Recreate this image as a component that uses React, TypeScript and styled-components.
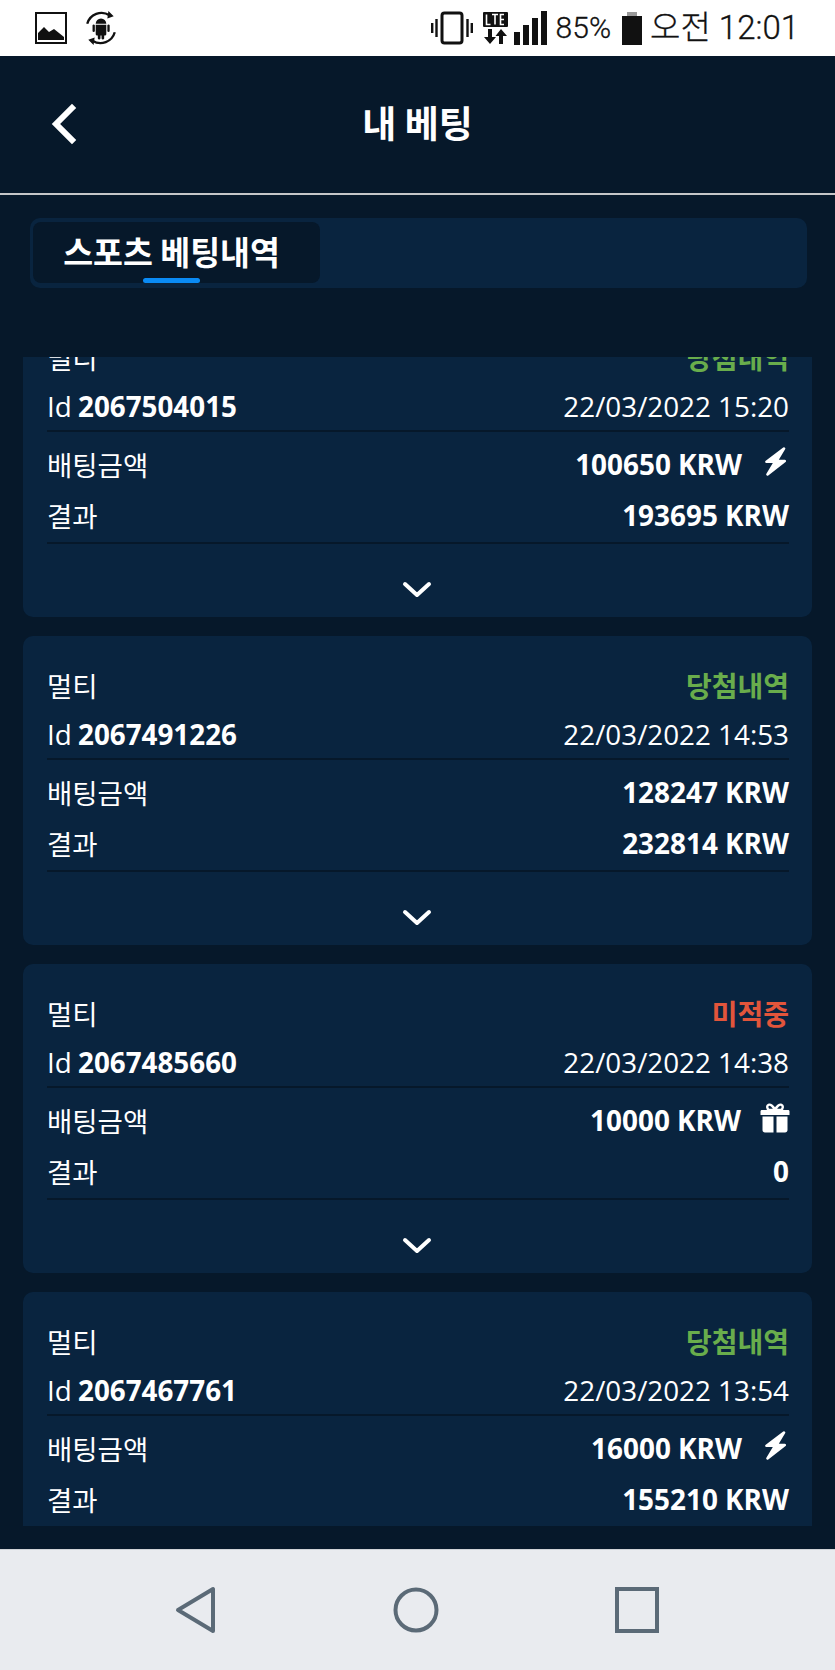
import { FC, useEffect, useRef } from "react";
import styled, { createGlobalStyle } from "styled-components";

const dark = "#06182a";
const panel = "#09243f";

const Global = createGlobalStyle`
  html, body {
    margin: 0;
    padding: 0;
    background: ${dark};
  }
  * {
    box-sizing: border-box;
  }
`;

const Screen = styled.div`
  width: 835px;
  height: 1670px;
  display: flex;
  flex-direction: column;
  overflow: hidden;
  background: ${dark};
  font-family: "Open Sans", "Noto Sans CJK KR", sans-serif;
  color: #fff;
`;

const StatusBar = styled.div`
  height: 56px;
  flex: none;
  display: flex;
  align-items: center;
  justify-content: space-between;
  padding: 0 36px 0 35px;
  background: #fff;
  color: #111;
  font-family: Roboto, "Noto Sans CJK KR", sans-serif;
`;

const StatusGroup = styled.div`
  display: flex;
  align-items: center;
`;

const StatusText = styled.span<{ $left: number; $size: number }>`
  font-size: ${(p) => p.$size}px;
  line-height: 56px;
  font-weight: 300;
  -webkit-text-stroke: 0.3px #111;
  margin-left: ${(p) => p.$left}px;
`;

const StatusIcon = styled.svg<{ $left?: number }>`
  display: block;
  flex: none;
  margin-left: ${(p) => p.$left ?? 0}px;
`;

const Header = styled.header`
  height: 139px;
  flex: none;
  display: flex;
  align-items: center;
  justify-content: center;
  position: relative;
  border-bottom: 2px solid #c4c6c8;
`;

const BackButton = styled.svg`
  position: absolute;
  left: 50px;
  top: 47px;
`;

const Title = styled.h1`
  margin: 0;
  font-size: 37px;
  font-weight: 700;
  line-height: 1;
  font-family: "Noto Sans CJK KR", sans-serif;
  padding-bottom: 5px;
`;

const TabBar = styled.nav`
  flex: none;
  height: 70px;
  margin: 23px 28px 0 30px;
  padding: 4px 3px 5px;
  border-radius: 10px;
  background: ${panel};
`;

const ActiveTab = styled.div`
  position: relative;
  width: 287px;
  height: 61px;
  display: flex;
  align-items: center;
  justify-content: center;
  padding: 0 10px 4px 0;
  border-radius: 8px;
  background: ${dark};
  font-family: "Noto Sans CJK KR", sans-serif;
  font-size: 32.5px;
  font-weight: 700;
`;

const TabMark = styled.span`
  position: absolute;
  left: 110px;
  bottom: 0;
  width: 57px;
  height: 5px;
  border-radius: 3px;
  background: #0a8bf5;
`;

const Scroller = styled.div`
  flex: none;
  height: 1169px;
  margin: 69px 23px 0;
  overflow: hidden;
`;

const CardList = styled.div`
  display: flex;
  flex-direction: column;
  gap: 19px;
`;

const Card = styled.article`
  height: 309px;
  flex: none;
  padding: 24px 23px 0 24px;
  border-radius: 10px;
  background: ${panel};
`;

const Row = styled.div<{ $h: number; $line?: boolean; $lift?: number }>`
  display: flex;
  align-items: center;
  justify-content: space-between;
  height: ${(p) => p.$h}px;
  padding-bottom: ${(p) => p.$lift ?? 0}px;
  border-bottom: ${(p) => (p.$line ? `2px solid #06182a` : "none")};
`;

const Label = styled.span`
  font-size: 27.5px;
  font-weight: 400;
  font-family: "Noto Sans CJK KR", sans-serif;
`;

const IdText = styled.span`
  font-size: 27.8px;
  font-weight: 400;
  word-spacing: -1px;
  b {
    font-weight: 700;
  }
`;

const DateText = styled.span`
  font-size: 27.8px;
  font-weight: 400;
`;

const Status = styled.span<{ $tone: "won" | "lost" }>`
  font-size: 28px;
  font-weight: 700;
  font-family: "Noto Sans CJK KR", sans-serif;
  color: ${(p) => (p.$tone === "won" ? "#69ad4c" : "#e2553b")};
`;

const Amount = styled.span`
  display: flex;
  align-items: center;
  font-size: 27.9px;
  font-weight: 700;
`;

const BoltIcon = styled.svg`
  display: block;
  flex: none;
  margin: -5px 3px 0 23px;
`;

const GiftIcon = styled.svg`
  display: block;
  flex: none;
  margin: -4px -1px 0 19px;
`;

const Expand = styled.div`
  display: flex;
  justify-content: center;
  padding: 37px 2px 0 0;
`;

const NavBar = styled.div`
  flex: none;
  height: 121px;
  margin-top: 23px;
  display: flex;
  align-items: flex-start;
  justify-content: center;
  gap: 175px;
  padding: 36px 1px 0 0;
  background: #e9ebef;
  border-top: 1px solid #cfd2d6;
`;

const Bolt: FC = () => (
  <BoltIcon width="21" height="29" viewBox="0 0 21 29">
    <path
      d="M19 1.500 1.500 14.800h8.500L2.500 27.500 19.800 14h-8.300Z"
      fill="#fff"
      stroke="#fff"
      strokeWidth="2.600"
      strokeLinejoin="round"
    />
  </BoltIcon>
);

const Gift: FC = () => (
  <GiftIcon width="30" height="30" viewBox="0 0 30 30">
    <path
      d="M15 7C13.500 3.500 10.500 1 8.500 1.800 6.500 2.600 7 6 9 7ZM15 7C16.500 3.500 19.500 1 21.500 1.800 23.500 2.600 23 6 21 7Z"
      fill="none"
      stroke="#fff"
      strokeWidth="2.400"
    />
    <path
      d="M2 7h26c1 0 1.500.5 1.500 1.500v3.500H.5V8.500C.5 7.500 1 7 2 7ZM2.500 13.500h11v16H5c-1.500 0-2.500-1-2.500-2.500ZM16.500 13.500h11V27c0 1.500-1 2.500-2.500 2.500h-8.500Z"
      fill="#fff"
    />
  </GiftIcon>
);

const Chevron: FC = () => (
  <svg width="30" height="18" viewBox="0 0 30 18">
    <path d="M3 3l12 11L27 3" fill="none" stroke="#fff" strokeWidth="4" strokeLinecap="round" strokeLinejoin="round" />
  </svg>
);

type Bet = {
  id: string;
  date: string;
  status: string;
  tone: "won" | "lost";
  stake: string;
  result: string;
  icon?: "bolt" | "gift";
};

const bets: Bet[] = [
  { id: "2067504015", date: "22/03/2022 15:20", status: "당첨내역", tone: "won", stake: "100650 KRW", result: "193695 KRW", icon: "bolt" },
  { id: "2067491226", date: "22/03/2022 14:53", status: "당첨내역", tone: "won", stake: "128247 KRW", result: "232814 KRW" },
  { id: "2067485660", date: "22/03/2022 14:38", status: "미적중", tone: "lost", stake: "10000 KRW", result: "0", icon: "gift" },
  { id: "2067467761", date: "22/03/2022 13:54", status: "당첨내역", tone: "won", stake: "16000 KRW", result: "155210 KRW", icon: "bolt" },
];

const BetCard: FC<Bet> = (props) => (
  <Card>
    <Row $h={50}>
      <Label>멀티</Label>
      <Status $tone={props.tone}>{props.status}</Status>
    </Row>
    <Row $h={50} $line>
      <IdText>
        Id <b>{props.id}</b>
      </IdText>
      <DateText>{props.date}</DateText>
    </Row>
    <Row $h={64}>
      <Label>배팅금액</Label>
      <Amount>
        {props.stake}
        {props.icon === "bolt" && <Bolt />}
        {props.icon === "gift" && <Gift />}
      </Amount>
    </Row>
    <Row $h={48} $line $lift={8}>
      <Label>결과</Label>
      <Amount>{props.result}</Amount>
    </Row>
    <Expand>
      <Chevron />
    </Expand>
  </Card>
);

const StatusIcons: FC = () => (
  <StatusGroup>
    <StatusIcon width="32" height="32" viewBox="0 0 32 32">
      <rect x="1" y="1" width="30" height="30" fill="none" stroke="#111" strokeWidth="2" />
      <path d="M3 28v-7l6-6 5 5 5-3 10 8v3Z" fill="#111" />
    </StatusIcon>
    <StatusIcon $left={16} width="36" height="36" viewBox="0 0 34 34">
      <path d="M4 13A14 14 0 0 1 25 5M30 21A14 14 0 0 1 9 29" fill="none" stroke="#111" strokeWidth="2.200" />
      <path d="M24 1l5 5-6 2ZM10 33l-5-5 6-2Z" fill="#111" />
      <path d="M12 13a5 5 0 0 1 10 0ZM12 14h10v9a1 1 0 0 1-1 1h-1v3a1.300 1.300 0 0 1-2.500 0v-3h-1v3a1.300 1.300 0 0 1-2.500 0v-3h-1a1 1 0 0 1-1-1ZM9 14.500a1.200 1.200 0 0 1 2.200 0V20a1.200 1.200 0 0 1-2.200 0ZM23 14.500a1.200 1.200 0 0 1 2.200 0V20a1.200 1.200 0 0 1-2.200 0Z" fill="#111" />
    </StatusIcon>
  </StatusGroup>
);

const SystemIcons: FC = () => (
  <StatusGroup>
    <StatusIcon width="42" height="34" viewBox="0 0 42 34">
      <rect x="11" y="2" width="20" height="30" rx="2.500" fill="none" stroke="#111" strokeWidth="3" />
      <path d="M1.200 12v10M5.500 8v18M36.500 8v18M40.800 12v10" stroke="#111" strokeWidth="2.400" />
    </StatusIcon>
    <StatusIcon $left={10} width="25" height="32" viewBox="0 0 25 32">
      <rect x="0" y="0" width="25" height="15" rx="1" fill="#111" />
      <path d="M3.500 2.500v10h4M9 2.500h6M12 2.500v10M21 2.500h-3.500v10H21M17.500 7.500H21" fill="none" stroke="#fff" strokeWidth="1.600" />
      <path d="M5 17v8H1l6 7 6-7H9v-8ZM16 32v-8h-3.500L18 17l6 7h-4v8Z" fill="#111" />
    </StatusIcon>
    <StatusIcon $left={6} width="33" height="34" viewBox="0 0 33 34">
      <path d="M0 21h6v13H0ZM9 14h6v20H9ZM18 7h6v27h-6ZM27 0h6v34h-6Z" fill="#111" />
    </StatusIcon>
    <StatusText $left={9} $size={30}>85%</StatusText>
    <StatusIcon $left={11} width="20" height="33" viewBox="0 0 20 33">
      <rect x="5" y="0" width="10" height="4" fill="#999" />
      <rect x="0" y="4" width="20" height="29" fill="#111" />
    </StatusIcon>
    <StatusText $left={8} $size={33}>오전 12:01</StatusText>
  </StatusGroup>
);

const App: FC = () => {
  const scroller = useRef<HTMLDivElement>(null);

  // the list is opened partly scrolled, the first card is cut at the top
  useEffect(() => {
    if (scroller.current) scroller.current.scrollTop = 49;
  }, []);

  return (
    <Screen>
      <Global />
      <StatusBar>
        <StatusIcons />
        <SystemIcons />
      </StatusBar>
      <Header>
        <BackButton width="28" height="42" viewBox="0 0 28 42">
          <path d="M22 5 6 21l16 16" fill="none" stroke="#fff" strokeWidth="6" strokeLinecap="square" />
        </BackButton>
        <Title>내 베팅</Title>
      </Header>
      <TabBar>
        <ActiveTab>
          스포츠 베팅내역
          <TabMark />
        </ActiveTab>
      </TabBar>
      <Scroller ref={scroller}>
        <CardList>
          {bets.map((bet) => (
            <BetCard key={bet.id} {...bet} />
          ))}
        </CardList>
      </Scroller>
      <NavBar>
        <svg width="44" height="48" viewBox="0 0 44 48">
          <path d="M39 3v42L4 24Z" fill="none" stroke="#5b6a77" strokeWidth="4" strokeLinejoin="round" />
        </svg>
        <svg width="46" height="48" viewBox="0 0 46 48">
          <circle cx="23" cy="24" r="20.500" fill="none" stroke="#5b6a77" strokeWidth="4" />
        </svg>
        <svg width="46" height="48" viewBox="0 0 46 48">
          <rect x="3" y="3" width="40" height="42" fill="none" stroke="#5b6a77" strokeWidth="4" />
        </svg>
      </NavBar>
    </Screen>
  );
};

export default App;
